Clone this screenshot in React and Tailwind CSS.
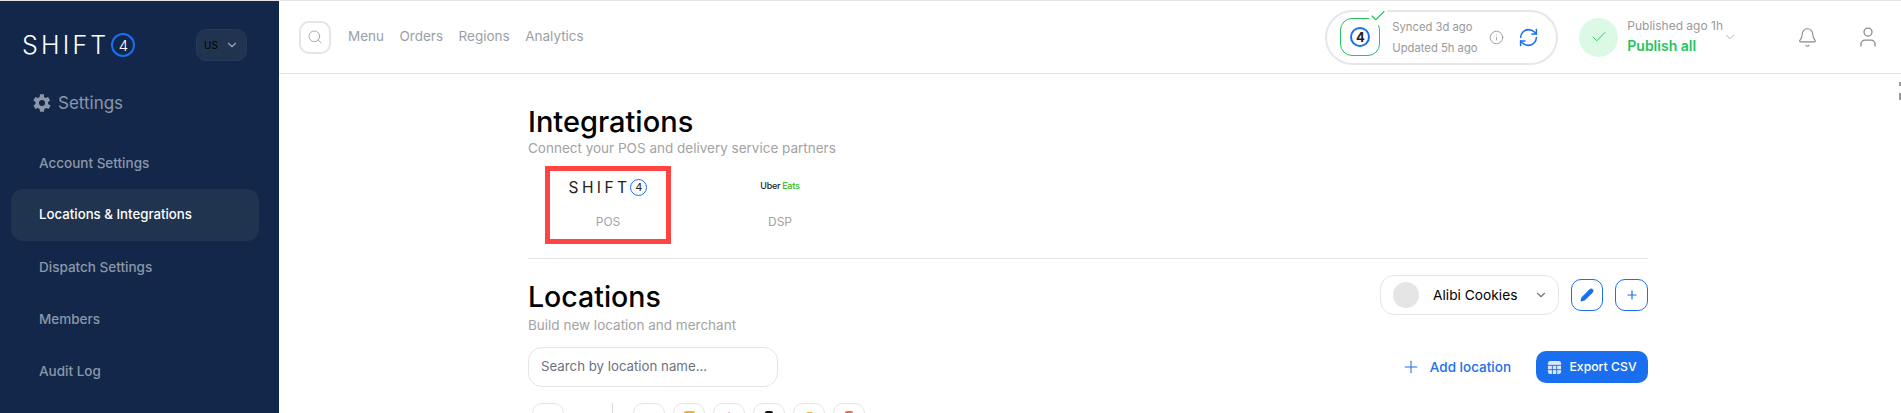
import React from 'react';
import { ChevronDown, Search, Info, RefreshCw, Check, Bell, User, Pencil, Plus } from 'lucide-react';

const sideLinks = ['Account Settings', 'Locations & Integrations', 'Dispatch Settings', 'Members', 'Audit Log'];
const topLinks = ['Menu', 'Orders', 'Regions', 'Analytics'];

// name, tip width and colour of the partner icons that peek in at the bottom edge
const partnerChips = [
  { id: 'all', tip: '' },
  { id: 'a', tip: 'mt-[0px] w-[11px] bg-[#f0b429]' },
  { id: 'b', tip: 'mt-[1px] w-[2px] bg-[#f29ab0]' },
  { id: 'c', tip: 'mt-[0px] w-[8px] bg-[#111111]' },
  { id: 'd', tip: 'mt-[1px] w-[7px] bg-[#f0b429]' },
  { id: 'e', tip: 'mt-[0px] w-[8px] bg-[#e96a6a]' },
];

function Shift4Logo({ dark }) {
  return (
    <div className="flex items-center">
      <span className={dark
        ? 'text-[25px] leading-none font-light tracking-[3.2px] text-white'
        : 'text-[15.5px] leading-none font-normal tracking-[3.4px] text-[#222222]'}>
        SHIFT
      </span>
      <span className={dark
        ? 'ml-[2px] flex h-[24px] w-[24px] items-center justify-center rounded-full border-2 border-[#1a6ff0] text-[15px] leading-none font-light text-white'
        : 'flex h-[17px] w-[17px] items-center justify-center rounded-full border border-[#1a6ff0] text-[11px] leading-none text-[#222222]'}>
        4
      </span>
    </div>
  );
}

function Sidebar() {
  return (
    <aside className="flex w-[279px] shrink-0 flex-col bg-[#12274a]">
      <div className="flex h-[88px] items-center justify-between pr-[32px] pl-[22px]">
        <Shift4Logo dark />
        <button className="flex h-[32px] w-[51px] items-center justify-center gap-[7px] rounded-[10px] border border-[#24395b] bg-[#20344f] text-[10px] text-black">
          US
          <ChevronDown className="h-[14px] w-[14px] text-[#9aa5b5]" />
        </button>
      </div>
      <div className="mt-[2px] flex items-center gap-[4px] pl-[30px] text-[#8c97a8]">
        <svg viewBox="0 0 24 24" className="h-[24px] w-[24px] fill-current">
          <path d="M20.400 13a7.600 7.600 0 0 0 0-2l2.100-1.600-2-3.500-2.500 1a7.500 7.500 0 0 0-1.700-1L16.400 3.200h-4l-.4 2.700a7.500 7.500 0 0 0-1.700 1l-2.500-1-2 3.500L7.900 11a7.600 7.600 0 0 0 0 2l-2.100 1.600 2 3.500 2.500-1c.5.4 1.100.7 1.700 1l.4 2.700h4l.4-2.700c.6-.3 1.200-.6 1.700-1l2.500 1 2-3.500zM14.400 15a3 3 0 1 1 0-6 3 3 0 0 1 0 6z" transform="translate(-2.400 0)" />
        </svg>
        <span className="text-[17px] leading-none">Settings</span>
      </div>
      <nav className="mt-[22px] flex flex-col pr-[20px] pl-[11px]">
        {sideLinks.map((link) => (
          <a
            key={link}
            className={`flex h-[52px] items-center rounded-[12px] pl-[28px] font-medium ${link.startsWith('Locations') ? 'bg-[#20344f] text-[13.25px] text-white' : 'text-[13.5px] text-[#8c97a8]'}`}
          >
            {link}
          </a>
        ))}
      </nav>
    </aside>
  );
}

function Header() {
  return (
    <header className="flex h-[73px] shrink-0 items-center border-b border-[#e5e5e5] pr-[21px] pl-[20px]">
      <div className="flex h-[33px] w-[32px] items-center justify-center rounded-[10px] border-2 border-[#e5e5e5]">
        <Search className="h-[16px] w-[16px] text-[#9a9a9a]" strokeWidth={1.25} />
      </div>
      <nav className="ml-[17px] flex -translate-y-[1px] items-center gap-[15.5px] text-[13.5px] text-[#9a9fa6]">
        {topLinks.map((link) => <a key={link}>{link}</a>)}
      </nav>

      <div className="ml-auto flex h-[55px] w-[233px] items-center rounded-full border-2 border-[#e5e7eb] pl-[13px]">
        <div className="relative flex h-[38px] w-[40px] items-center justify-center rounded-[12px] border border-[#22c55e]">
          <span className="flex h-[20px] w-[20px] items-center justify-center rounded-full border-2 border-[#1a6ff0] text-[13px] leading-none font-bold text-[#222222]">4</span>
          <Check className="absolute -top-[12px] -right-[8px] h-[18px] w-[18px] bg-white text-[#22c55e]" strokeWidth={1.5} />
        </div>
        <div className="ml-[12px] flex flex-col gap-[7px] text-[11.25px] leading-[14px] text-[#9a9a9a]">
          <span>Synced 3d ago</span>
          <span>Updated 5h ago</span>
        </div>
        <Info className="ml-[11px] h-[15px] w-[15px] text-[#8a8a8a]" strokeWidth={1.25} />
        <RefreshCw className="ml-[14px] h-[21px] w-[21px] text-[#1a6ff0]" strokeWidth={1.75} />
      </div>

      <div className="ml-[21px] flex h-[39px] w-[39px] items-center justify-center rounded-full bg-[#dcf9e6]">
        <Check className="h-[18px] w-[18px] text-[#22c55e]" strokeWidth={1.25} />
      </div>
      <div className="ml-[9px] flex flex-col gap-[5px] pb-[2px]">
        <span className="text-[12px] leading-[14px] text-[#9a9a9a]">Published ago 1h</span>
        <span className="text-[14px] leading-[16px] font-semibold text-[#22c55e]">Publish all</span>
      </div>
      <ChevronDown className="h-[14px] w-[14px] text-[#9a9a9a]" strokeWidth={1.25} />
      <Bell className="ml-[60px] h-[21px] w-[21px] text-[#8a8a8a]" strokeWidth={1.25} />
      <User className="ml-[38px] h-[24px] w-[24px] text-[#8a8a8a]" strokeWidth={1.25} />
    </header>
  );
}

function Content() {
  return (
    <main className="flex-1 pr-[253px] pl-[249px]">
      <h1 className="mt-[30px] text-[29px] leading-[36px] font-medium text-black">Integrations</h1>
      <p className="text-[13.5px] leading-[16px] text-[#a3a3a3]">Connect your POS and delivery service partners</p>

      <div className="mt-[10px] flex">
        <div className="ml-[17px] flex h-[78px] w-[126px] flex-col items-center border-[5px] border-[#ff4444] pt-[8px]">
          <Shift4Logo />
          <span className="mt-[19px] text-[12px] leading-[14px] text-[#a3a3a3]">POS</span>
        </div>
        <div className="ml-[89px] flex w-[40px] flex-col items-center pt-[14px]">
          <span className="whitespace-nowrap text-[9px] leading-[12px] font-medium tracking-[-0.3px] text-[#222222]">
            Uber <span className="font-semibold text-[#3fc23a]">Eats</span>
          </span>
          <span className="mt-[23px] text-[12px] leading-[14px] text-[#a3a3a3]">DSP</span>
        </div>
      </div>

      <div className="mt-[14px] h-px bg-[#e5e5e5]" />

      <div className="mt-[16px] flex items-start justify-between">
        <div>
          <h2 className="mt-[2px] text-[28.5px] leading-[40px] font-medium text-black">Locations</h2>
          <p className="text-[13.5px] leading-[16px] text-[#a3a3a3]">Build new location and merchant</p>
        </div>
        <div className="flex items-center">
          <button className="flex h-[40px] w-[179px] items-center rounded-[14px] border border-[#e5e5e5] pl-[12px]">
            <span className="h-[26px] w-[26px] rounded-full bg-[#e5e5e5]" />
            <span className="ml-[14px] text-[13.75px] text-black">Alibi Cookies</span>
            <ChevronDown className="mr-[10px] ml-auto h-[14px] w-[14px] text-[#777777]" />
          </button>
          <button className="ml-[12px] flex h-[32px] w-[32px] items-center justify-center rounded-[10px] border border-[#1a6ff0]">
            <Pencil className="h-[14px] w-[14px] fill-[#1a6ff0] text-[#1a6ff0]" />
          </button>
          <button className="ml-[12px] flex h-[32px] w-[33px] items-center justify-center rounded-[10px] border border-[#1a6ff0]">
            <Plus className="h-[14px] w-[14px] text-[#1a6ff0]" />
          </button>
        </div>
      </div>

      <div className="mt-[14px] flex items-center justify-between">
        <div className="flex h-[40px] w-[250px] items-center rounded-[14px] border border-[#e5e5e5] pl-[12px] text-[13.25px] text-[#6b7280]">
          Search by location name...
        </div>
        <div className="flex items-center">
          <Plus className="h-[20px] w-[20px] text-[#1a6ff0]" strokeWidth={1.25} />
          <span className="ml-[9px] text-[13.5px] font-medium text-[#1a6ff0]">Add location</span>
          <button className="ml-[25px] flex h-[32px] w-[112px] items-center justify-center gap-[7px] rounded-[10px] bg-[#1a6ff0] text-[12.25px] font-medium text-white">
            <svg viewBox="0 0 16 16" className="h-[15px] w-[15px]">
              <rect x="1" y="1" width="14" height="14" rx="2.500" fill="#dbe8fd" />
              <path d="M1 5.700h14M1 10.300h14M5.700 5.700v9.300M10.300 5.700v9.300" stroke="#1a6ff0" strokeWidth="1" />
            </svg>
            Export CSV
          </button>
        </div>
      </div>

      <div className="mt-[16px] flex items-start">
        <div className="ml-[4px] h-[32px] w-[32px] rounded-[10px] border border-[#e5e5e5]" />
        <div className="ml-[48px] h-[32px] w-px bg-[#d9d9d9]" />
        <div className="ml-[20px] flex gap-[8px]">
          {partnerChips.map((chip) => (
            <div key={chip.id} className="flex h-[32px] w-[32px] justify-center rounded-[10px] border border-[#e5e5e5] pt-[7px]">
              {chip.tip && <span className={`h-[16px] rounded-t-[2px] ${chip.tip}`} />}
            </div>
          ))}
        </div>
      </div>
    </main>
  );
}

export default function App() {
  return (
    <div className="relative flex h-[413px] w-[1901px] flex-col overflow-hidden bg-white font-['Inter',sans-serif]">
      <div className="h-px shrink-0 bg-[#e5e5e5]" />
      <div className="flex min-h-0 flex-1">
        <Sidebar />
        <div className="flex min-w-0 flex-1 flex-col">
          <Header />
          <Content />
        </div>
      </div>
      {/* scrollbar arrow clipped at the right edge */}
      <div className="absolute top-[82px] right-0 h-[4px] w-[2px] bg-[#999999]" />
      <div className="absolute top-[93px] right-0 h-[7px] w-[2px] bg-[#999999]" />
    </div>
  );
}
